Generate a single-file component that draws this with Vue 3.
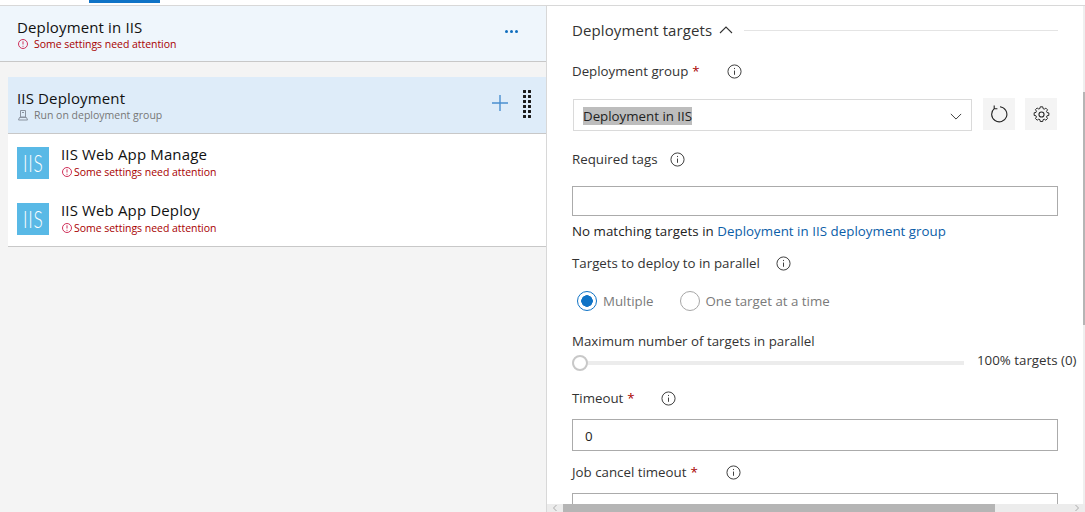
<template>
    <div class="page">
        <div class="top-strip"><span class="active-tab"></span></div>
        <div class="main">
            <section class="left">
                <header class="stage-head">
                    <div>
                        <div class="stage-title">Deployment in IIS</div>
                        <div class="warn stage-warn">
                            <svg class="warn-icon" viewBox="0 0 12 12"><circle cx="6" cy="6" r="4.5" /><path d="M6 3.3v3.2M6 7.8v1" /></svg>
                            <span class="warn-gap">Some settings need attention</span>
                        </div>
                    </div>
                    <span class="dots"><i></i><i></i><i></i></span>
                </header>

                <div class="phase">
                    <div class="phase-head">
                        <div>
                            <div class="phase-title">IIS Deployment</div>
                            <div class="phase-sub">
                                <svg class="server-icon" viewBox="0 0 12 12"><path d="M3.5 1.5h5v6.5h-5zM5 3.5h2M2.5 8.5h7l1 2.5h-9z" /></svg>
                                <span>Run on deployment group</span>
                            </div>
                        </div>
                        <div class="phase-actions">
                            <svg class="plus" viewBox="0 0 18 18"><path d="M9 1v16M1 9h16" /></svg>
                            <span class="grip"></span>
                        </div>
                    </div>
                    <div v-for="task in tasks" :key="task" class="task">
                        <div class="task-icon"><span>IIS</span></div>
                        <div>
                            <div class="task-title">{{ task }}</div>
                            <div class="warn task-warn">
                                <svg class="warn-icon" viewBox="0 0 12 12"><circle cx="6" cy="6" r="4.5" /><path d="M6 3.3v3.2M6 7.8v1" /></svg>
                                <span>Some settings need attention</span>
                            </div>
                        </div>
                    </div>
                </div>
            </section>

            <section class="right">
                <div class="right-row">
                    <div class="form">
                        <div class="section-head">
                            <span class="section-title">Deployment targets</span>
                            <svg class="chev-up" viewBox="0 0 14 8"><path d="M1 7l6-6 6 6" /></svg>
                            <span class="section-line"></span>
                        </div>

                        <div class="label l-group">
                            <span>Deployment group</span><b>*</b>
                            <svg class="info i-group" viewBox="0 0 16 16"><circle cx="8" cy="8" r="7" /><path d="M8 7v4.5M8 4.2v1.2" /></svg>
                        </div>
                        <div class="select-row">
                            <div class="select">
                                <span class="selected-text">Deployment in IIS</span>
                                <svg class="chev-down" viewBox="0 0 14 8"><path d="M1 1l6 6 6-6" /></svg>
                            </div>
                            <button class="icon-btn">
                                <svg viewBox="0 0 18 18" class="refresh"><path d="M4.2 3.6A7.6 7.6 0 1 0 10 1.7M4.2 0.6v3.2h3.2" /></svg>
                            </button>
                            <button class="icon-btn">
                                <svg viewBox="0 0 20 20" class="gear">
                                    <path d="M8.4 1.5h3.2l.5 2.4 1.5.6 2-1.3 2.2 2.2-1.3 2 .6 1.5 2.4.5v3.2l-2.4.5-.6 1.5 1.3 2-2.2 2.2-2-1.3-1.5.6-.5 2.4H8.4l-.5-2.4-1.5-.6-2 1.3-2.2-2.2 1.3-2-.6-1.5-2.4-.5V9.2l2.4-.5.6-1.5-1.3-2 2.2-2.2 2 1.3 1.5-.6z" transform="translate(0.9 -0.4) scale(0.91)" />
                                    <circle cx="10" cy="10" r="3" />
                                </svg>
                            </button>
                        </div>

                        <div class="label l-tags">
                            <span>Required tags</span>
                            <svg class="info i-tags" viewBox="0 0 16 16"><circle cx="8" cy="8" r="7" /><path d="M8 7v4.5M8 4.2v1.2" /></svg>
                        </div>
                        <div class="input tags-input"></div>
                        <div class="match">No matching targets in <a>Deployment in IIS deployment group</a></div>

                        <div class="label l-parallel">
                            <span>Targets to deploy to in parallel</span>
                            <svg class="info i-parallel" viewBox="0 0 16 16"><circle cx="8" cy="8" r="7" /><path d="M8 7v4.5M8 4.2v1.2" /></svg>
                        </div>
                        <div class="radios">
                            <span class="radio on"></span><span class="radio-label">Multiple</span>
                            <span class="radio"></span><span class="radio-label">One target at a time</span>
                        </div>

                        <div class="label l-max">Maximum number of targets in parallel</div>
                        <div class="slider-row">
                            <div class="slider"><span class="thumb"></span></div>
                            <span class="slider-value">100% targets (0)</span>
                        </div>

                        <div class="label l-timeout">
                            <span>Timeout</span><b>*</b>
                            <svg class="info i-timeout" viewBox="0 0 16 16"><circle cx="8" cy="8" r="7" /><path d="M8 7v4.5M8 4.2v1.2" /></svg>
                        </div>
                        <div class="input">0</div>

                        <div class="label l-cancel">
                            <span>Job cancel timeout</span><b>*</b>
                            <svg class="info i-cancel" viewBox="0 0 16 16"><circle cx="8" cy="8" r="7" /><path d="M8 7v4.5M8 4.2v1.2" /></svg>
                        </div>
                        <div class="input"></div>
                    </div>
                    <div class="vbar"><span class="vthumb"></span></div>
                </div>
                <div class="hbar">
                    <svg class="harrow" viewBox="0 0 6 8"><path d="M4.5 1L1.5 4l3 3" /></svg>
                    <span class="hthumb"></span>
                    <svg class="harrow" viewBox="0 0 6 8"><path d="M1.5 1l3 3-3 3" /></svg>
                </div>
            </section>
        </div>
    </div>
</template>

<script setup>
const tasks = ['IIS Web App Manage', 'IIS Web App Deploy'];
</script>

<style>
html, body { margin: 0; background: #fff; overflow: hidden; }
</style>

<style scoped>
.page {
    width: 1085px;
    height: 512px;
    display: flex;
    flex-direction: column;
    overflow: hidden;
    font-family: "Open Sans", "Noto Sans", sans-serif;
    color: #333;
}
.top-strip {
    height: 5px;
    flex: none;
    border-bottom: 1px solid #d8d8d8;
    padding-left: 89px;
}
.active-tab {
    display: block;
    width: 71px;
    height: 3px;
    background: #0f73c6;
}
.main {
    flex: 1;
    display: flex;
    min-height: 0;
}
.left {
    width: 546px;
    flex: none;
    background: #f4f4f4;
    border-right: 1px solid #d8d8d8;
}
.stage-head {
    height: 56px;
    box-sizing: border-box;
    background: #eff6fc;
    border-bottom: 1px solid #c8c8c8;
    padding: 12px 28px 0 17px;
    display: flex;
    justify-content: space-between;
    align-items: flex-start;
}
.stage-title, .phase-title, .task-title {
    font-size: 15px;
    line-height: 18px;
    color: #111;
    letter-spacing: .14px;
}
.warn {
    display: flex;
    align-items: center;
    gap: 1px;
    font-size: 10.5px;
    line-height: 14px;
    color: #a80000;
    letter-spacing: -.04px;
}
.stage-warn { margin-top: 1px; }
.task-warn { margin-top: 2px; }
.warn-gap { margin-left: 4px; }
.warn-icon {
    width: 12px;
    height: 12px;
    fill: none;
    stroke: #d0305a;
    stroke-width: 1;
}
.dots {
    display: flex;
    gap: 2px;
    margin-top: 12px;
}
.dots i {
    width: 3px;
    height: 3px;
    border-radius: 50%;
    background: #106ebe;
}
.phase {
    margin: 15px 0 0 8px;
    background: #fff;
    border-bottom: 1px solid #c8c8c8;
}
.phase-head {
    height: 57px;
    box-sizing: border-box;
    background: #deecf9;
    border-bottom: 1px solid #c8c8c8;
    padding: 12px 15px 0 9px;
    display: flex;
    justify-content: space-between;
}
.phase-sub {
    display: flex;
    align-items: center;
    gap: 5px;
    margin-top: 1px;
    font-size: 10.5px;
    line-height: 14px;
    color: #777;
}
.server-icon {
    width: 12px;
    height: 12px;
    fill: none;
    stroke: #8a93a0;
    stroke-width: 1;
}
.phase-actions {
    display: flex;
    align-items: flex-start;
    gap: 14px;
}
.plus {
    width: 18px;
    height: 18px;
    margin-top: 5px;
    fill: none;
    stroke: #4a8fd0;
    stroke-width: 1.4;
}
.grip {
    width: 8px;
    height: 28px;
    margin-top: 1px;
    background-image: radial-gradient(circle at 1.5px 1.5px, #1a1a1a 1.4px, transparent 1.7px);
    background-size: 5px 5px;
}
.task {
    height: 56px;
    box-sizing: border-box;
    padding: 13px 0 0 9px;
    display: flex;
    gap: 12px;
}
.task-icon {
    width: 32px;
    height: 32px;
    background: #59b9e6;
    color: #fff;
    font-family: "Lato", sans-serif;
    font-weight: 300;
    font-size: 24px;
    line-height: 32px;
    text-align: center;
    letter-spacing: 1px;
}
.task-icon span {
    display: inline-block;
    transform: scaleX(.72);
}
.task-title { margin-top: -2px; }
.right {
    flex: 1;
    min-width: 0;
    display: flex;
    flex-direction: column;
}
.right-row {
    flex: 1;
    min-height: 0;
    display: flex;
}
.form {
    flex: 1;
    min-width: 0;
    overflow: hidden;
    padding: 14px 25px 0 25px;
    box-sizing: border-box;
}
.section-head {
    display: flex;
    align-items: center;
    height: 20px;
}
.section-title {
    font-size: 15px;
    letter-spacing: .1px;
    color: #333;
    white-space: nowrap;
}
.chev-up, .chev-down {
    width: 14px;
    height: 8px;
    fill: none;
    stroke: #333;
    stroke-width: 1.1;
}
.chev-up { margin-left: 7px; }
.section-line {
    flex: 1;
    height: 1px;
    background: #e4e4e4;
    margin-left: 11px;
}
.label {
    display: flex;
    align-items: center;
    font-size: 13.3px;
    line-height: 18px;
    color: #333;
}
.label b {
    color: #a80000;
    font-weight: 400;
    margin-left: 4px;
}
.info {
    width: 15px;
    height: 15px;
    fill: none;
    stroke: #333;
    stroke-width: 1;
}
.l-group { margin-top: 22px; }
.i-group { margin-left: 27px; }
.select-row {
    display: flex;
    align-items: flex-start;
    gap: 11px;
    margin-top: 19px;
    padding-left: 1px;
}
.select {
    width: 399px;
    height: 32px;
    box-sizing: border-box;
    border: 1px solid #dadada;
    padding: 2px 9px 0;
    display: flex;
    align-items: center;
    justify-content: space-between;
    font-size: 13.3px;
    color: #222;
}
.selected-text {
    background: #bdbdbd;
    line-height: 18px;
}
.chev-down { width: 12px; height: 7px; }
.icon-btn {
    width: 32px;
    height: 32px;
    margin-top: -1px;
    border: 0;
    padding: 0;
    background: #f4f4f4;
    display: flex;
    align-items: center;
    justify-content: center;
}
.icon-btn + .icon-btn { margin-left: -1px; }
.refresh, .gear {
    fill: none;
    stroke: #222;
    stroke-width: 1.1;
}
.refresh { width: 18px; height: 18px; }
.gear { width: 17px; height: 17px; stroke-width: 1.25; }
.l-tags { margin-top: 19px; }
.i-tags { margin-left: 12px; }
.input {
    height: 32px;
    margin-top: 12px;
    box-sizing: border-box;
    border: 1px solid #ababab;
    padding: 0 12px;
    font-size: 13.3px;
    line-height: 32px;
    color: #222;
}
.tags-input { height: 30px; margin-top: 18px; }
.match {
    margin-top: 6px;
    font-size: 13.3px;
    line-height: 18px;
    color: #222;
    letter-spacing: .04px;
}
.match a { color: #0b5ea8; }
.l-parallel { margin-top: 14px; }
.i-parallel { margin-left: 16px; }
.radios {
    display: flex;
    align-items: center;
    margin-top: 19px;
    padding-left: 5px;
    font-size: 13.3px;
    color: #7a7a7a;
}
.radio {
    width: 20px;
    height: 20px;
    box-sizing: border-box;
    border: 1px solid #a6a6a6;
    border-radius: 50%;
}
.radio.on {
    border-color: #0f73c6;
    background: radial-gradient(circle, #0f73c6 5.5px, transparent 6px);
}
.radio-label { margin: 0 26px 0 6px; }
.l-max { margin-top: 21px; }
.slider-row {
    display: flex;
    align-items: center;
    height: 18px;
    margin-top: 4px;
}
.slider {
    position: relative;
    width: 392px;
    flex: none;
    height: 4px;
    background: #ececec;
}
.thumb {
    position: absolute;
    left: 0;
    top: -6px;
    width: 16px;
    height: 16px;
    box-sizing: border-box;
    border: 2px solid #c8c8c8;
    border-radius: 50%;
    background: #fff;
}
.slider-value {
    margin: 0 0 6px 13px;
    font-size: 13.3px;
    white-space: nowrap;
    color: #333;
}
.l-timeout { margin-top: 17px; }
.i-timeout { margin-left: 26px; }
.l-cancel { margin-top: 12px; }
.i-cancel { margin-left: 28px; }
.vbar {
    width: 2px;
    flex: none;
    background: #efefef;
}
.vthumb {
    display: block;
    width: 2px;
    height: 233px;
    margin-top: 86px;
    background: #b5b5b5;
}
.hbar {
    height: 8px;
    flex: none;
    background: #ececec;
    display: flex;
    align-items: center;
}
.harrow {
    width: 16px;
    height: 8px;
    flex: none;
    fill: none;
    stroke: #999;
    stroke-width: .8;
}
.hthumb {
    width: 432px;
    height: 8px;
    background: #b5b5b5;
}
.hthumb + .harrow { margin-left: auto; }
</style>
